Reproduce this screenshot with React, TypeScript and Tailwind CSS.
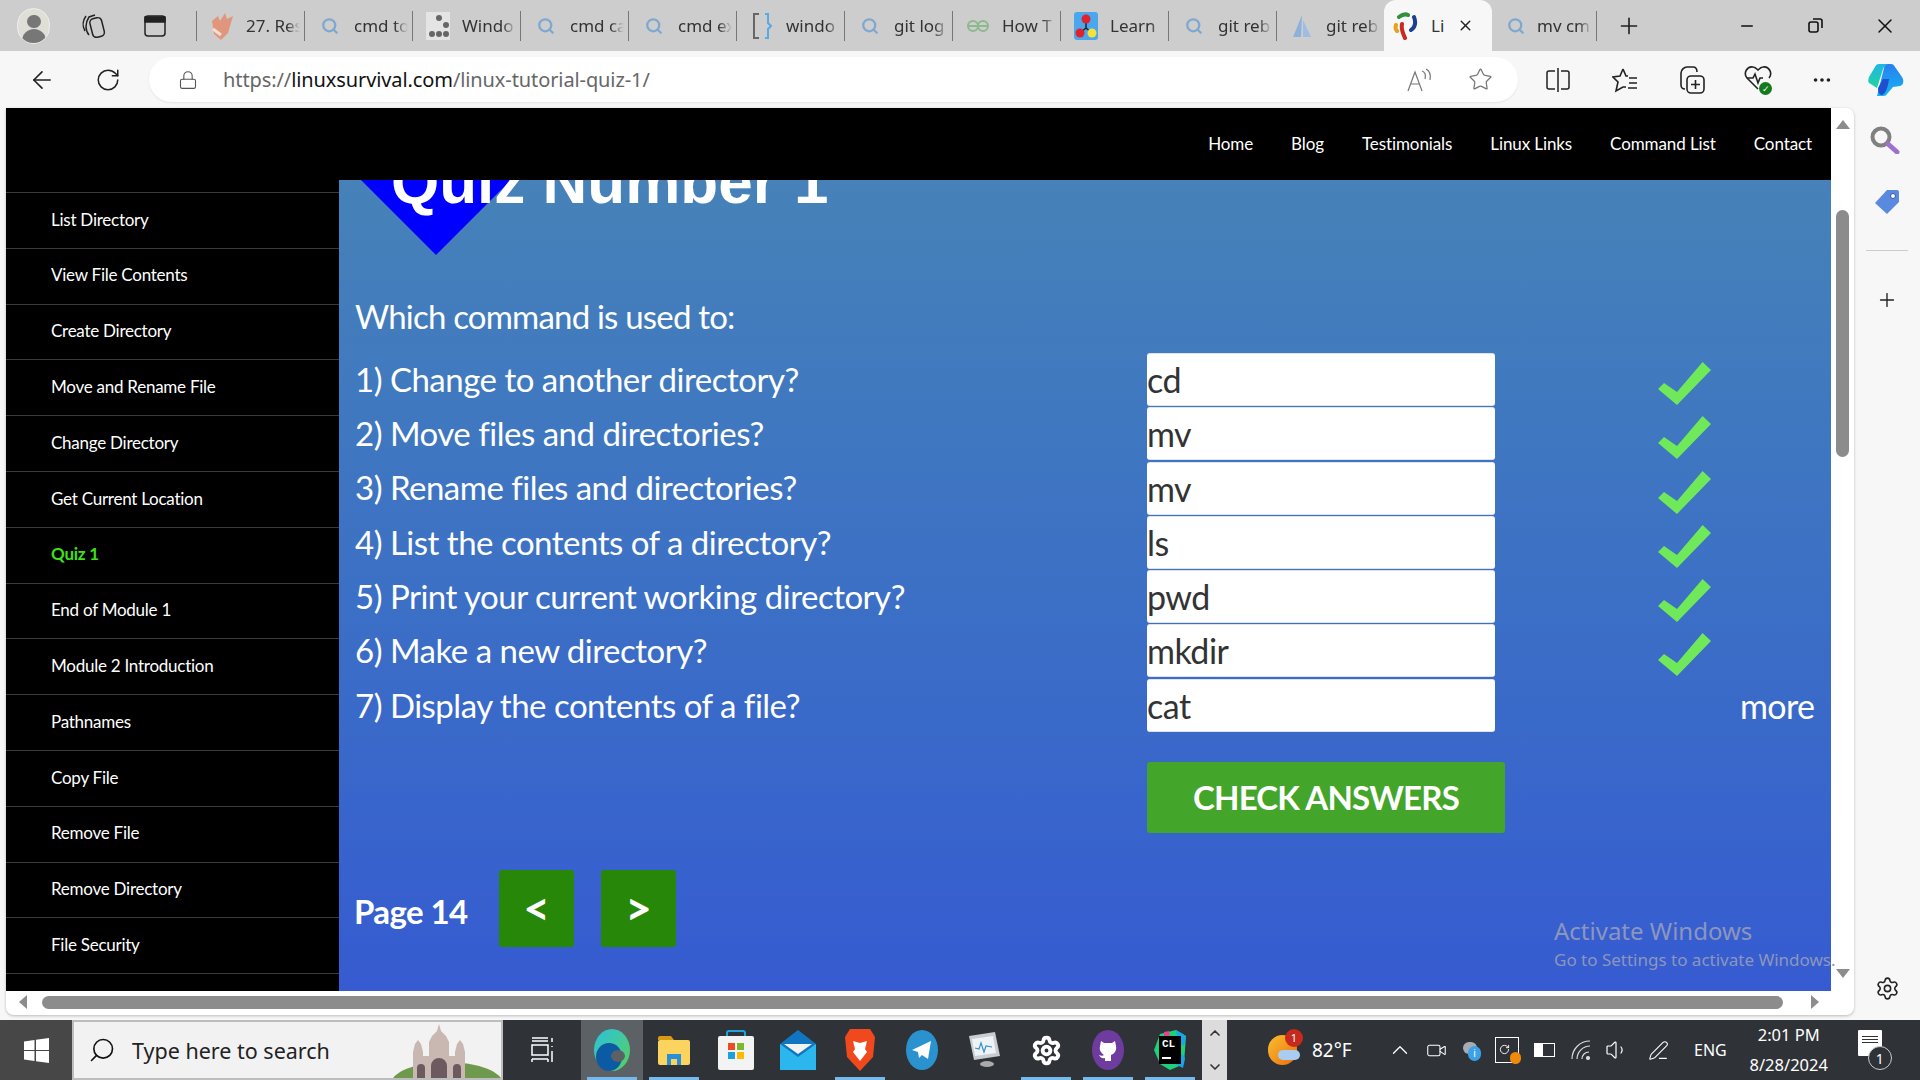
import { ArrowLeft, RotateCw, Lock, Star, Plus, X, Minus, Search, MoreHorizontal, Settings, ChevronUp, ChevronDown, Volume1, Video, PenLine } from "lucide-react";
import type { ReactNode } from "react";

const SearchFav = () => <Search size={18} strokeWidth={3} className="text-[#7ea8cf]" />;

const GridFav = () => (
  <svg width="24" height="28" viewBox="0 0 24 28">
    <rect width="24" height="28" fill="#e4e4e4" />
    <circle cx="6" cy="22" r="3" fill="#666" />
    <circle cx="13" cy="22" r="3" fill="#666" />
    <circle cx="20" cy="22" r="3" fill="#666" />
    <circle cx="13" cy="6" r="3" fill="#666" />
    <circle cx="20" cy="13" r="3" fill="#666" />
  </svg>
);

const tabs: { label: string; icon: ReactNode }[] = [
  {
    label: "27. Res",
    icon: (
      <svg width="26" height="30" viewBox="0 0 26 30">
        <path d="M3 10 9 5l2 5 5-8 2 6 6-3-5 17-7 7-7-6Z" fill="#e0967c" />
        <path d="M4 18l8 6" stroke="#f6dcd2" strokeWidth="3" />
      </svg>
    ),
  },
  { label: "cmd to", icon: <SearchFav /> },
  { label: "Windo", icon: <GridFav /> },
  { label: "cmd ca", icon: <SearchFav /> },
  { label: "cmd ex", icon: <SearchFav /> },
  {
    label: "windo",
    icon: (
      <svg width="20" height="28" viewBox="0 0 20 28" fill="none" strokeWidth="2">
        <path d="M7 2H2v24h5" stroke="#666" />
        <path d="M13 2h3v9l3 3-3 3v9h-3" stroke="#5aa9e0" />
      </svg>
    ),
  },
  { label: "git log", icon: <SearchFav /> },
  {
    label: "How T",
    icon: (
      <svg width="24" height="14" viewBox="0 0 24 14" fill="none" stroke="#8db98d" strokeWidth="2">
        <circle cx="7" cy="7" r="5" />
        <circle cx="17" cy="7" r="5" />
        <path d="M1 7h22" />
      </svg>
    ),
  },
  {
    label: "Learn",
    icon: (
      <svg width="24" height="28" viewBox="0 0 24 28">
        <rect width="24" height="28" rx="3" fill="#4aa7ee" />
        <path d="M12 7v9M12 16l-6 5M12 16l6 5" stroke="#222" strokeWidth="1.5" />
        <circle cx="12" cy="7" r="4.5" fill="#e0232a" />
        <circle cx="6" cy="21" r="4.5" fill="#e0232a" />
        <circle cx="18" cy="21" r="4.5" fill="#f4e23a" />
      </svg>
    ),
  },
  { label: "git reb", icon: <SearchFav /> },
  {
    label: "git reb",
    icon: (
      <svg width="20" height="24" viewBox="0 0 20 24">
        <path d="M10 1 1 23h8Z" fill="#8eb1dc" />
        <path d="M11 6 19 23h-8Z" fill="#9dbde2" />
      </svg>
    ),
  },
];

const LinuxFav = () => (
  <svg width="26" height="28" viewBox="0 0 26 28" fill="none" strokeWidth="4" strokeLinecap="round">
    <path d="M6 5C10 2 13 2 15 3" stroke="#2f8f3a" />
    <path d="M21 5c2 5 1 10-3 13" stroke="#1d3f8f" />
    <path d="M3 13c-1 3 0 5 1 6" stroke="#e8a020" />
    <path d="M9 12c-1 5 1 10 3 14" stroke="#c92a1f" />
  </svg>
);

const menu = [
  "List Directory",
  "View File Contents",
  "Create Directory",
  "Move and Rename File",
  "Change Directory",
  "Get Current Location",
  "Quiz 1",
  "End of Module 1",
  "Module 2 Introduction",
  "Pathnames",
  "Copy File",
  "Remove File",
  "Remove Directory",
  "File Security",
];

const navLinks = ["Home", "Blog", "Testimonials", "Linux Links", "Command List", "Contact"];

const questions = [
  { q: "1) Change to another directory?", a: "cd", ok: true },
  { q: "2) Move files and directories?", a: "mv", ok: true },
  { q: "3) Rename files and directories?", a: "mv", ok: true },
  { q: "4) List the contents of a directory?", a: "ls", ok: true },
  { q: "5) Print your current working directory?", a: "pwd", ok: true },
  { q: "6) Make a new directory?", a: "mkdir", ok: true },
  { q: "7) Display the contents of a file?", a: "cat", ok: false },
];

const Check = () => (
  <svg width="53" height="43" viewBox="0 0 53 43" className="ml-[163px] mt-[9px] shrink-0">
    <polygon points="0,27 6,21 19,30 44.6,0 53,8 19,43" fill="#6fe85a" />
  </svg>
);

function TabStrip() {
  return (
    <div className="h-[51px] bg-[#cdcdcd] flex items-stretch font-['Noto_Sans',sans-serif] text-[17px] text-[#333]">
      <div className="w-[197px] flex items-center relative border-r-0">
        <div className="ml-[17px] w-[33px] h-[36px] rounded-full bg-[#dfdfd8] border border-[#eee] overflow-hidden flex flex-col items-center">
          <div className="w-[14px] h-[14px] rounded-full bg-[#777] mt-[6px]" />
          <div className="w-[24px] h-[14px] rounded-t-full bg-[#777] mt-[1px]" />
        </div>
        <svg width="26" height="28" viewBox="0 0 26 28" fill="none" stroke="#222" strokeWidth="1.5" className="ml-[30px]">
          <rect x="11" y="6" width="12" height="19" rx="4" transform="rotate(-14 17 15)" />
          <path d="M9 23C5 18 5 11 9 5l6-2" />
          <path d="M5 19C2 14 3 8 6 4" />
        </svg>
        <svg width="22" height="22" viewBox="0 0 22 22" fill="none" stroke="#222" strokeWidth="1.5" className="ml-[38px]">
          <rect x="1" y="1" width="20" height="20" rx="3" />
          <path d="M1 2h20v5H1Z" fill="#222" />
        </svg>
        <div className="absolute left-[196px] top-[11px] h-[30px] w-px bg-[#777]" />
      </div>
      {tabs.map((t, i) => (
        <div key={i} className="w-[108px] flex items-center relative">
          <div className="w-[49px] pl-[4px] pr-[4px] flex justify-center shrink-0">{t.icon}</div>
          <span className="overflow-hidden whitespace-nowrap w-[54px] [mask-image:linear-gradient(to_right,black_75%,transparent)]">{t.label}</span>
          {i < 10 && <div className="absolute right-0 top-[11px] h-[30px] w-px bg-[#777]" />}
        </div>
      ))}
      <div className="w-[108px] -ml-px bg-[#f7f7f7] rounded-t-xl flex items-center">
        <div className="w-[47px] pr-[4px] flex justify-center shrink-0"><LinuxFav /></div>
        <span className="w-[14px] overflow-hidden whitespace-nowrap">Li</span>
        <X size={17} className="ml-[12px] text-[#222]" />
      </div>
      <div className="w-[105px] flex items-center relative">
        <div className="w-[45px] pl-[2px] flex justify-center shrink-0"><SearchFav /></div>
        <span className="overflow-hidden whitespace-nowrap w-[55px] [mask-image:linear-gradient(to_right,black_75%,transparent)]">mv cm</span>
        <div className="absolute right-0 top-[11px] h-[30px] w-px bg-[#777]" />
      </div>
      <div className="flex items-center ml-[19px]"><Plus size={26} strokeWidth={1.5} className="text-[#222]" /></div>
      <div className="flex items-center ml-auto text-[#111]">
        <Minus size={18} strokeWidth={2} />
        <svg width="15" height="15" viewBox="0 0 15 15" fill="none" stroke="#111" strokeWidth="1.6" className="ml-[52px]">
          <rect x="1" y="4" width="9" height="10" rx="2" />
          <path d="M5 1h7a2 2 0 0 1 2 2v7" />
        </svg>
        <X size={24} strokeWidth={1.5} className="ml-[50px] mr-[23px]" />
      </div>
    </div>
  );
}

function Toolbar() {
  return (
    <div className="h-[57px] bg-[#f7f7f7] flex items-center text-[#222] font-['Noto_Sans',sans-serif]">
      <ArrowLeft size={28} strokeWidth={1.4} className="ml-[28px]" />
      <RotateCw size={26} strokeWidth={1.4} className="ml-[39px]" />
      <div className="ml-[28px] w-[1369px] h-[45px] bg-white rounded-full flex items-center shadow-[0_1px_2px_rgba(0,0,0,0.08)]">
        <Lock size={20} strokeWidth={1.3} className="ml-[29px] text-[#555]" />
        <div className="ml-[25px] text-[20px] text-[#666] whitespace-nowrap tracking-[-0.1px]">
          https://<span className="text-[#111]">linuxsurvival.com</span>/linux-tutorial-quiz-1/
        </div>
        <div className="ml-auto flex items-center text-[#777]">
          <svg width="26" height="24" viewBox="0 0 26 24" fill="none" stroke="#777" strokeWidth="1.2">
            <path d="M1 23 8 4l7 19M4 16h8" />
            <path d="M15 3c3 1 4 4 3 8M19 1c4 2 5 6 4 11" />
          </svg>
          <Star size={25} strokeWidth={1.2} className="ml-[35px] mr-[25px]" />
        </div>
      </div>
      <svg width="24" height="24" viewBox="0 0 24 24" fill="none" stroke="#222" strokeWidth="1.5" className="ml-[28px]">
        <path d="M12 0v24M9 3H3a2 2 0 0 0-2 2v14a2 2 0 0 0 2 2h6M15 3h6a2 2 0 0 1 2 2v14a2 2 0 0 1-2 2h-6" />
      </svg>
      <svg width="26" height="26" viewBox="0 0 26 26" fill="none" stroke="#222" strokeWidth="1.6" className="ml-[42px]">
        <path d="M11 2 8 9 1 10l5 5-2 9 7-4 3 0M11 2l3 7h2M17 11h8M17 16h8M16 21h9" />
      </svg>
      <svg width="26" height="30" viewBox="0 0 26 30" fill="none" stroke="#222" strokeWidth="1.6" className="ml-[41px]">
        <rect x="8" y="11" width="17" height="17" rx="4" />
        <path d="M16.500 15v9M12 19.500h9M6 24C3 24 2 22 2 20V8c0-3 3-6 6-6h6c3 0 4 2 4 5" />
      </svg>
      <div className="ml-[39px] relative w-[28px] h-[30px]">
        <svg width="28" height="26" viewBox="0 0 28 26" fill="none" stroke="#222" strokeWidth="1.6">
          <path d="M14 24 3 13C-1 8 3 1 9 2c2 0 4 2 5 3 1-1 3-3 5-3 6-1 10 6 6 11" />
          <path d="M3 13h6l2-4 3 9 2-5h3" />
        </svg>
        <div className="absolute right-0 bottom-0 w-[13px] h-[13px] rounded-full bg-[#157a1f] flex items-center justify-center text-white text-[9px] leading-none">✓</div>
      </div>
      <MoreHorizontal size={22} className="ml-[39px]" />
      <svg width="36" height="32" viewBox="0 0 36 32" className="ml-[35px]">
        <defs>
          <linearGradient id="cp1" x1="0" y1="0" x2="0" y2="1">
            <stop offset="0" stopColor="#1fb6e8" />
            <stop offset="1" stopColor="#22d59a" />
          </linearGradient>
          <linearGradient id="cp2" x1="0" y1="0" x2="0" y2="1">
            <stop offset="0" stopColor="#2a7ff0" />
            <stop offset="1" stopColor="#12b5f0" />
          </linearGradient>
        </defs>
        <path d="M17 0h6c2 0 3 1 4 3l7 10c2 3 2 8-2 9l-7 1-6 7c-1 2-3 2-5 2H9Z" fill="url(#cp2)" />
        <path d="M11 0h9c-3 1-4 3-5 5L9 24 1 19c-1-1-1-3 0-6L7 3c1-2 2-3 4-3Z" fill="url(#cp1)" />
        <path d="M10 24l5-9h6c-1 7-3 15-7 16-3 0-4-3-4-7Z" fill="#1d4fd0" />
      </svg>
    </div>
  );
}

function Sidebar() {
  return (
    <div className="w-[333px] h-full bg-black pt-[12px] overflow-hidden shrink-0">
      {menu.map((m) => (
        <div
          key={m}
          className={`h-[55.8px] border-t border-[#3a3a3a] pl-[45px] pb-[2px] flex items-center text-[17px] tracking-[-0.25px] ${
            m === "Quiz 1" ? "text-[#3fe01c] font-bold" : "text-white"
          }`}
        >
          {m}
        </div>
      ))}
      <div className="border-t border-[#3a3a3a]" />
    </div>
  );
}

function Quiz() {
  return (
    <div className="flex-1 h-full overflow-hidden bg-gradient-to-b from-[#4682b8] to-[#365bd1] pl-[16px] text-white">
      <div className="h-[110px] relative">
        <svg width="150" height="76" viewBox="0 0 150 76" className="absolute left-[6px] top-0">
          <polygon points="0,0 150,0 75,75" fill="#0000ff" />
        </svg>
        <div className="relative pl-[36px] h-[70px] font-['Liberation_Sans',sans-serif] font-bold text-[62px] leading-[70px] -translate-y-[33px] whitespace-nowrap">
          Quiz Number 1
        </div>
      </div>
      <div className="h-[54px] flex items-center text-[33px] tracking-[-0.8px]">Which command is used to:</div>
      <div className="mt-[9px] flex flex-col gap-[1.300px]">
        {questions.map((r) => (
          <div key={r.q} className="h-[53px] flex items-start">
            <div className="w-[792px] shrink-0 h-full flex items-center text-[33px] tracking-[-0.5px]">{r.q}</div>
            <input
              readOnly
              value={r.a}
              className="w-[348px] h-[53px] shrink-0 bg-white border-y border-[#dfe3ea] rounded-[3px] pl-0 text-[34px] text-[#333] outline-none tracking-[-0.5px]"
            />
            {r.ok ? <Check /> : <div className="ml-[245px] h-full flex items-center text-[34px] tracking-[-0.6px]">more</div>}
          </div>
        ))}
      </div>
      <button className="block ml-[792px] mt-[30px] w-[358px] h-[71px] bg-[#43a62a] rounded-[3px] text-[33px] font-bold tracking-[-0.8px]">CHECK ANSWERS</button>
      <div className="mt-[37px] flex items-start">
        <div className="mt-[16px] -ml-px w-[145px] h-[52px] flex items-center text-[33px] font-bold tracking-[-0.6px]">Page 14</div>
        <button className="w-[75px] h-[77px] bg-[#278708] rounded-[3px] text-[46px] font-bold leading-none">&lt;</button>
        <button className="ml-[27px] w-[75px] h-[77px] bg-[#278708] rounded-[3px] text-[46px] font-bold leading-none">&gt;</button>
      </div>
    </div>
  );
}

function Browser() {
  return (
    <div className="flex h-[912px]">
      <div className="ml-[6px] w-[1848px] h-[907px] bg-white rounded-b-lg rounded-tr-lg shadow-[0_1px_3px_rgba(0,0,0,0.25)] overflow-hidden relative flex flex-col font-['Lato',sans-serif]">
        <div className="h-[883px] flex">
          <div className="w-[1825px] h-full flex flex-col">
            <div className="h-[72px] bg-black flex items-center justify-end gap-[38px] pr-[19px] text-[17px] text-white tracking-[-0.1px] shrink-0">
              {navLinks.map((n) => (
                <span key={n}>{n}</span>
              ))}
            </div>
            <div className="flex flex-1 min-h-0">
              <Sidebar />
              <Quiz />
            </div>
          </div>
          <div className="w-[23px] flex flex-col items-center pt-[12px]">
            <div className="w-0 h-0 border-x-[7px] border-x-transparent border-b-[9px] border-b-[#8c8c8c]" />
            <div className="w-[13px] h-[247px] bg-[#8c8c8c] rounded-full mt-[81px]" />
            <div className="w-0 h-0 border-x-[7px] border-x-transparent border-t-[9px] border-t-[#8c8c8c] mt-[512px]" />
          </div>
        </div>
        <div className="h-[24px] flex items-start pt-[5px]">
          <div className="ml-[13px] w-0 h-0 mt-[-1px] border-y-[7px] border-y-transparent border-r-[8px] border-r-[#8c8c8c]" />
          <div className="ml-[15px] w-[1741px] h-[13px] bg-[#8c8c8c] rounded-full" />
          <div className="ml-[28px] w-0 h-0 mt-[-1px] border-y-[7px] border-y-transparent border-l-[8px] border-l-[#8c8c8c]" />
        </div>
        <div className="absolute left-[1548px] top-[806px] text-[#8c96bd] font-['Noto_Sans',sans-serif] whitespace-nowrap pointer-events-none">
          <div className="text-[24px] leading-[34px]">Activate Windows</div>
          <div className="text-[17px] leading-[24px]">Go to Settings to activate Windows.</div>
        </div>
      </div>
      <div className="flex-1 flex flex-col items-center text-[#222]">
        <svg width="30" height="28" viewBox="0 0 30 28" fill="none" className="mt-[18px] -ml-[4px]">
          <circle cx="11" cy="11" r="8.500" stroke="#808080" strokeWidth="4" />
          <path d="M18 18l9 8" stroke="#a070d0" strokeWidth="5" strokeLinecap="round" />
        </svg>
        <svg width="26" height="26" viewBox="0 0 26 26" className="mt-[35px]">
          <path d="M13 1h10a2 2 0 0 1 2 2v10L13 25 1 14Z" fill="#5a8ae0" />
          <circle cx="19" cy="7" r="2.500" fill="#fff" stroke="#3b4f9a" strokeWidth="1" />
        </svg>
        <div className="w-[42px] h-px bg-[#ccc] mt-[35px]" />
        <Plus size={22} strokeWidth={1.5} className="mt-[38px]" />
        <Settings size={25} strokeWidth={1.5} className="mt-[665px]" />
      </div>
    </div>
  );
}

function TaskCell({ active, running, children }: { active?: boolean; running?: boolean; children: ReactNode }) {
  return (
    <div className={`w-[62px] h-full relative flex items-center justify-center ${active ? "bg-[#5b6165]" : ""}`}>
      {children}
      {running && <div className="absolute bottom-0 left-[6px] right-[6px] h-[3px] bg-[#76b9ed]" />}
    </div>
  );
}

function Taskbar() {
  return (
    <div className="h-[60px] bg-[#2f3338] flex items-stretch text-white font-['Noto_Sans',sans-serif]">
      <div className="w-[72px] bg-[#474747] flex items-center justify-center">
        <svg width="25" height="25" viewBox="0 0 25 25" fill="#fff">
          <path d="M0 3.500 10.500 2v10H0ZM12 1.800 25 0v12H12ZM0 13h10.500v10L0 21.500ZM12 13h13v12l-13-1.800Z" />
        </svg>
      </div>
      <div className="w-[431px] bg-[#f2f2f2] border-2 border-[#bdbdbd] flex items-center relative overflow-hidden">
        <Search size={28} strokeWidth={1.4} className="ml-[14px] text-[#111] -scale-x-100" />
        <span className="ml-[16px] mt-[2px] text-[#222] text-[21.500px]">Type here to search</span>
        <svg width="120" height="56" viewBox="0 0 120 56" className="absolute right-0 bottom-0">
          <ellipse cx="66" cy="62" rx="56" ry="22" fill="#6f9a4e" />
          <path d="M32 56V30l2-8 3-4 3 4 2 8v4h6V20l3-6 5-5 2-7 2 7 5 5 3 6v14h6v-4l2-8 3-4 3 4 2 8v26Z" fill="#c9b7b2" />
          <path d="M36 56V46a4 4 0 0 1 8 0v10ZM50 56V44a8 8 0 0 1 16 0v12ZM72 56V46a4 4 0 0 1 8 0v10Z" fill="#6d5a60" />
        </svg>
      </div>
      <div className="w-[78px] flex items-center justify-center">
        <svg width="24" height="26" viewBox="0 0 24 26" fill="none" stroke="#fff" strokeWidth="1.5">
          <path d="M2 1h16M2 4h16M2 8h16v10H2ZM2 22h16M18 22v3M2 22v3M22 1v4M22 9v1M22 14v11" />
        </svg>
      </div>
      <TaskCell active running>
        <svg width="36" height="42" viewBox="0 0 36 42">
          <defs>
            <linearGradient id="edge" x1="0" y1="0" x2="1" y2="1">
              <stop offset="0" stopColor="#2bc1e0" />
              <stop offset="1" stopColor="#58d15a" />
            </linearGradient>
          </defs>
          <ellipse cx="18" cy="21" rx="18" ry="21" fill="url(#edge)" />
          <ellipse cx="15" cy="28" rx="13" ry="14" fill="#0c59a4" />
          <ellipse cx="24" cy="27" rx="7" ry="6" fill="#5b6165" />
        </svg>
      </TaskCell>
      <TaskCell running>
        <svg width="34" height="30" viewBox="0 0 34 30">
          <path d="M1 3a2 2 0 0 1 2-2h11l3 4H1Z" fill="#d79a14" />
          <rect x="1" y="5" width="32" height="25" rx="2" fill="#fbd45f" />
          <path d="M10 30V19h14v11h-4v-6h-6v6Z" fill="#2b8fd8" />
        </svg>
      </TaskCell>
      <TaskCell>
        <svg width="36" height="40" viewBox="0 0 36 40">
          <path d="M9 6V3a2 2 0 0 1 2-2h14a2 2 0 0 1 2 2v3" fill="none" stroke="#1ca4de" strokeWidth="2" />
          <rect y="6" width="36" height="34" rx="2" fill="#f3f3f3" />
          <rect x="10" y="13" width="7" height="7" fill="#ef4b23" />
          <rect x="19" y="13" width="7" height="7" fill="#7db928" />
          <rect x="10" y="22" width="7" height="7" fill="#1ba0e2" />
          <rect x="19" y="22" width="7" height="7" fill="#ffb900" />
        </svg>
      </TaskCell>
      <TaskCell>
        <svg width="36" height="40" viewBox="0 0 36 40">
          <path d="M0 14 18 0l18 14v26H0Z" fill="#1176c2" />
          <path d="M4 14h28L18 24Z" fill="#f2f2f2" />
          <path d="M0 14l18 13 18-13v26H0Z" fill="#2cb6ee" />
        </svg>
      </TaskCell>
      <TaskCell running>
        <svg width="30" height="42" viewBox="0 0 30 42">
          <path d="M5 0h20l5 8-2 20-13 14L2 28 0 8Z" fill="#f1491e" />
          <path d="M8 12l7 2 7-2-2 8 2 3-7 9-7-9 2-3Z" fill="#fff" />
        </svg>
      </TaskCell>
      <TaskCell>
        <svg width="32" height="40" viewBox="0 0 32 40">
          <ellipse cx="16" cy="20" rx="16" ry="20" fill="#2a92cf" />
          <path d="M6 20 25 11 22 29l-6-4-3 3-1-6Z" fill="#fff" />
        </svg>
      </TaskCell>
      <TaskCell>
        <svg width="34" height="36" viewBox="0 0 34 36">
          <path d="M2 4 28 0l5 24-26 4Z" fill="#c9ccd1" />
          <path d="M5 7 26 4l3 17-21 3Z" fill="#eef3f7" />
          <path d="M8 16l4 1 2-6 3 9 2-6 6 1" fill="none" stroke="#3f8fc7" strokeWidth="1.2" />
          <ellipse cx="20" cy="32" rx="7" ry="3" fill="#aaa" />
        </svg>
      </TaskCell>
      <TaskCell running>
        <Settings size={31} strokeWidth={3} className="text-white" />
      </TaskCell>
      <TaskCell running>
        <svg width="32" height="40" viewBox="0 0 32 40">
          <ellipse cx="16" cy="20" rx="16" ry="20" fill="#6e3b9e" />
          <path d="M9 11l3 2h8l3-2 1 5c1 5-2 8-5 9v6h-6v-3c-3 1-5-1-6-3 2 1 4 1 5 0-3-2-5-5-4-9Z" fill="#fff" />
        </svg>
      </TaskCell>
      <TaskCell running>
        <div className="relative w-[32px] h-[40px] flex items-center justify-center">
          <svg width="32" height="40" viewBox="0 0 32 40" className="absolute inset-0">
            <path d="M6 4 22 0l10 6-2 28-14 6-10-6-6-14Z" fill="#1ed07a" />
            <path d="M22 0l10 6-2 10-6-4ZM28 24l3 4-2 10-8-4Z" fill="#1aa5e8" />
            <path d="M10 2l5-1 1 6h-6Z" fill="#e8428c" />
          </svg>
          <div className="relative w-[22px] h-[28px] bg-black px-[3px] pt-[2px] font-['Liberation_Mono',monospace] font-bold text-[11px] leading-[12px] text-white">
            CL
            <div className="w-[9px] h-[2px] bg-white mt-[7px]" />
          </div>
        </div>
      </TaskCell>
      <div className="w-[25px] ml-px bg-[#dcdcdc] flex flex-col items-center justify-center gap-[18px] text-[#333]">
        <ChevronUp size={16} strokeWidth={2.5} />
        <ChevronDown size={16} strokeWidth={2.5} />
      </div>
      <div className="flex items-center relative">
        <div className="ml-[41px] w-[29px] h-[30px] rounded-full bg-gradient-to-br from-[#f7c02d] to-[#ec6a10] relative">
          <div className="absolute -top-[6px] right-[-6px] w-[18px] h-[18px] rounded-full bg-[#c52a1d] text-[11px] flex items-center justify-center">1</div>
          <div className="absolute bottom-[5px] right-[-3px] w-[22px] h-[10px] rounded-full bg-[#a9cdf0]" />
        </div>
        <span className="ml-[15px] text-[19px] w-[50px]">82°F</span>
        <ChevronUp size={26} strokeWidth={1.2} className="ml-[25px]" />
        <Video size={21} strokeWidth={1.2} className="ml-[13px]" />
        <div className="ml-[16px] relative w-[18px] h-[22px]">
          <div className="absolute top-[3px] w-[14px] h-[12px] rounded-full bg-[#a6acb3]" />
          <div className="absolute right-0 bottom-0 w-[13px] h-[15px] rounded-full bg-[#3ca2e8] text-[10px] leading-[15px] text-center">i</div>
        </div>
        <div className="ml-[14px] relative w-[24px] h-[26px] border border-white">
          <div className="absolute -right-[3px] -bottom-[2px] w-[11px] h-[12px] rounded-full bg-[#f08a0a]" />
          <RotateCw size={11} className="absolute left-[3px] top-[6px]" />
        </div>
        <div className="ml-[15px] w-[21px] h-[14px] border border-white flex">
          <div className="w-[8px] bg-white" />
        </div>
        <svg width="22" height="22" viewBox="0 0 22 22" fill="none" stroke="#ddd" strokeWidth="1.2" className="ml-[15px]">
          <path d="M2 20C2 10 10 2 20 2M7 20c0-7 6-13 13-13M12 20c0-4 3-7 7-7" />
          <circle cx="18" cy="19" r="1.500" fill="#ddd" />
        </svg>
        <Volume1 size={24} strokeWidth={1.2} className="ml-[13px]" />
        <PenLine size={21} strokeWidth={1.2} className="ml-[19px]" />
        <span className="ml-[25px] text-[16px]">ENG</span>
        <div className="ml-[17px] w-[90px] flex flex-col items-center text-[16.500px] leading-[30px]">
          <span>2:01 PM</span>
          <span>8/28/2024</span>
        </div>
        <div className="ml-[24px] relative w-[34px] h-[40px]">
          <div className="w-[24px] h-[26px] bg-white rounded-[1px] flex flex-col gap-[2px] pt-[6px] px-[4px]">
            <div className="h-[1px] bg-[#333]" />
            <div className="h-[1px] bg-[#333]" />
            <div className="h-[1px] bg-[#333]" />
          </div>
          <div className="absolute right-[0px] bottom-[0px] w-[24px] h-[24px] rounded-full bg-[#2f3338] border border-[#ccc] text-[14px] flex items-center justify-center">1</div>
        </div>
      </div>
    </div>
  );
}

export default function App() {
  return (
    <div className="w-[1920px] h-[1080px] overflow-hidden bg-[#f7f7f7]">
      <TabStrip />
      <Toolbar />
      <Browser />
      <Taskbar />
    </div>
  );
}
